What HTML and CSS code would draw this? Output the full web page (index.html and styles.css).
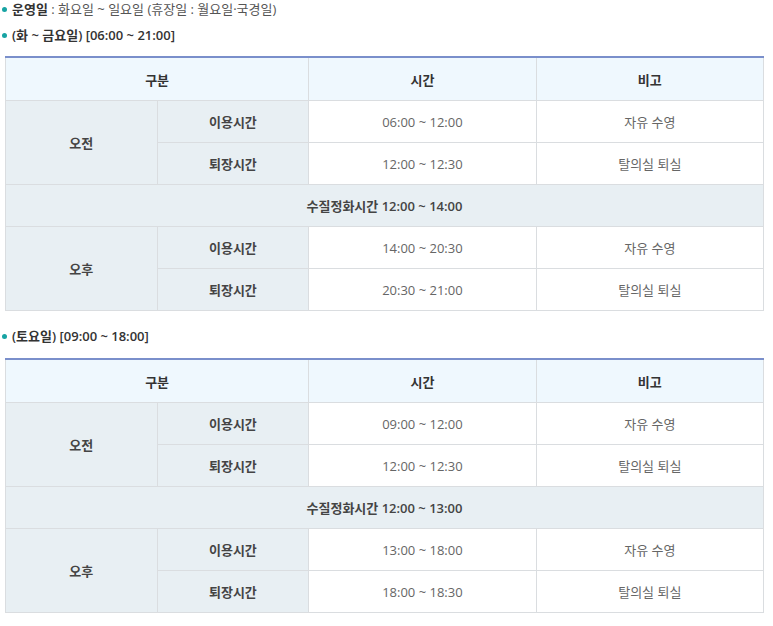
FILE: index.html
```html
<!DOCTYPE html>
<html lang="ko">
<head>
<meta charset="utf-8">
<link rel="stylesheet" href="styles.css">
</head>
<body>
<div class="wrap">
  <ul class="info">
    <li><strong>운영일</strong> : 화요일 ~ 일요일 (휴장일 : 월요일·국경일)</li>
    <li><strong>(화 ~ 금요일) [06:00 ~ 21:00]</strong></li>
  </ul>
  <table class="tbl">
    <colgroup><col class="c1"><col class="c2"><col class="c3"><col class="c4"></colgroup>
    <thead>
      <tr><th colspan="2">구분</th><th>시간</th><th>비고</th></tr>
    </thead>
    <tbody>
      <tr><th rowspan="2" class="lab">오전</th><th class="lab">이용시간</th><td>06:00 ~ 12:00</td><td>자유 수영</td></tr>
      <tr><th class="lab">퇴장시간</th><td>12:00 ~ 12:30</td><td>탈의실 퇴실</td></tr>
      <tr><th colspan="4" class="lab">수질정화시간 12:00 ~ 14:00</th></tr>
      <tr><th rowspan="2" class="lab">오후</th><th class="lab">이용시간</th><td>14:00 ~ 20:30</td><td>자유 수영</td></tr>
      <tr><th class="lab">퇴장시간</th><td>20:30 ~ 21:00</td><td>탈의실 퇴실</td></tr>
    </tbody>
  </table>
  <ul class="info second">
    <li><strong>(토요일) [09:00 ~ 18:00]</strong></li>
  </ul>
  <table class="tbl">
    <colgroup><col class="c1"><col class="c2"><col class="c3"><col class="c4"></colgroup>
    <thead>
      <tr><th colspan="2">구분</th><th>시간</th><th>비고</th></tr>
    </thead>
    <tbody>
      <tr><th rowspan="2" class="lab">오전</th><th class="lab">이용시간</th><td>09:00 ~ 12:00</td><td>자유 수영</td></tr>
      <tr><th class="lab">퇴장시간</th><td>12:00 ~ 12:30</td><td>탈의실 퇴실</td></tr>
      <tr><th colspan="4" class="lab">수질정화시간 12:00 ~ 13:00</th></tr>
      <tr><th rowspan="2" class="lab">오후</th><th class="lab">이용시간</th><td>13:00 ~ 18:00</td><td>자유 수영</td></tr>
      <tr><th class="lab">퇴장시간</th><td>18:00 ~ 18:30</td><td>탈의실 퇴실</td></tr>
    </tbody>
  </table>
</div>
</body>
</html>
```

FILE: styles.css
```css
html, body {
  margin: 0;
  padding: 0;
  background: #fff;
}
body {
  font-family: "Open Sans", "Noto Sans CJK KR", sans-serif;
  font-size: 13px;
  color: #555;
}
.wrap {
  padding: 0 9px 0 5px;
}
.info {
  list-style: none;
  margin: -4px 0 8px;
  padding: 0;
}
.info li {
  position: relative;
  padding-left: 7px;
  line-height: 26px;
  height: 26px;
  color: #555;
}
.info li::before {
  content: "";
  position: absolute;
  left: -3px;
  top: 11px;
  width: 5px;
  height: 5px;
  border-radius: 50%;
  background: #17a3a3;
}
.info strong {
  color: #333;
  font-weight: 600;
}
.info.second {
  margin-top: 12px;
  margin-bottom: 9px;
}
.tbl {
  width: 759px;
  border-collapse: collapse;
  table-layout: fixed;
  border-top: 2px solid #7a8fcb;
}
.tbl col.c1, .tbl col.c2 { width: 20%; }
.tbl col.c3, .tbl col.c4 { width: 30%; }
.tbl th, .tbl td {
  border: 1px solid #dadde0;
  height: 41px;
  padding: 0;
  text-align: center;
  vertical-align: middle;
  font-size: 13px;
}
.tbl thead th {
  background: #eff8fe;
  color: #333;
  font-weight: 600;
  height: 42px;
}
.tbl th.lab {
  background: #e8eff3;
  color: #444;
  font-weight: 600;
}
.tbl td {
  background: #fff;
  color: #666;
  font-weight: 400;
}
```
